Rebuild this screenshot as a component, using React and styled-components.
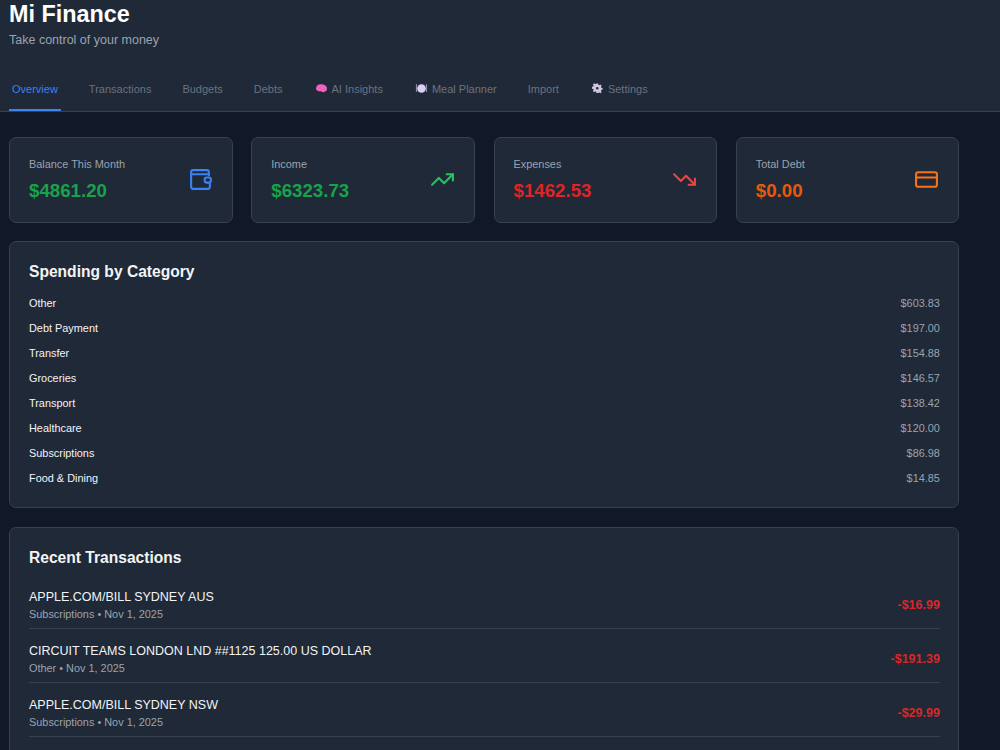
import styled, { createGlobalStyle } from 'styled-components'
import { TrendingUp, TrendingDown, CreditCard } from 'lucide-react'

const GlobalStyle = createGlobalStyle`
  html, body {
    margin: 0;
    padding: 0;
    height: 750px;
    overflow: hidden;
    background: #111827;
    font-family: "Liberation Sans", Arial, sans-serif;
  }
`

const tabs = [
  { label: 'Overview', active: true },
  { label: 'Transactions' },
  { label: 'Budgets' },
  { label: 'Debts' },
  { label: 'AI Insights', icon: 'brain' },
  { label: 'Meal Planner', icon: 'plate' },
  { label: 'Import' },
  { label: 'Settings', icon: 'gear' },
]

const categories = [
  ['Other', '$603.83'],
  ['Debt Payment', '$197.00'],
  ['Transfer', '$154.88'],
  ['Groceries', '$146.57'],
  ['Transport', '$138.42'],
  ['Healthcare', '$120.00'],
  ['Subscriptions', '$86.98'],
  ['Food & Dining', '$14.85'],
]

const transactions = [
  ['APPLE.COM/BILL SYDNEY AUS', 'Subscriptions • Nov 1, 2025', '-$16.99'],
  ['CIRCUIT TEAMS LONDON LND ##1125 125.00 US DOLLAR', 'Other • Nov 1, 2025', '-$191.39'],
  ['APPLE.COM/BILL SYDNEY NSW', 'Subscriptions • Nov 1, 2025', '-$29.99'],
]

const WalletIcon = ({ color }) => (
  <svg width="25" height="25" viewBox="0 0 24 24" fill="none" stroke={color} strokeWidth="2" strokeLinecap="round" strokeLinejoin="round">
    <path d="M20 8V5a2 2 0 0 0-2-2H5a2 2 0 0 0-2 2v14a2 2 0 0 0 2 2h14a2 2 0 0 0 2-2v-3" />
    <path d="M3 7h17" />
    <rect x="16" y="10" width="6" height="5" rx="2" />
  </svg>
)

// colour emoji in the tabs, drawn small
const TabEmoji = ({ type }) => {
  if (type === 'brain') {
    return (
      <svg width="15" height="13" viewBox="0 0 15 13">
        <path d="M2 6.500C2 3.800 4 2.300 7 2.300s6 1.500 6 4.400c0 1.600-.8 2.600-2.200 2.700-.6.800-1.500 1-2.400.7-.7-.6-1.300-.8-2.400-.8C3.700 9.300 2 8.400 2 6.500z" fill="#f062bd" />
      </svg>
    )
  }
  if (type === 'plate') {
    return (
      <svg width="15" height="13" viewBox="0 0 15 13">
        <path d="M2.500 2.500v7M12.500 2.500v7" stroke="#8f8ca6" strokeWidth="1.200" strokeLinecap="round" />
        <circle cx="7.500" cy="6.500" r="4.300" fill="#dccff5" />
      </svg>
    )
  }
  return (
    <svg width="15" height="13" viewBox="0 0 15 13">
      <g transform="translate(2 1) scale(.44)">
        <path
          fillRule="evenodd"
          d="M10 1h4l.6 3.200 1.900.8 2.700-1.800 2.800 2.800-1.800 2.700.8 1.900 3 .6v4l-3 .6-.8 1.900 1.800 2.700-2.800 2.800-2.700-1.800-1.900.8L14 23h-4l-.6-3.200-1.900-.8-2.700 1.800-2.800-2.800 1.800-2.700-.8-1.900-3-.6v-4l3-.6.8-1.900-1.800-2.700 2.800-2.800 2.700 1.800 1.900-.8zM12 9a3 3 0 1 0 0 6 3 3 0 0 0 0-6z"
          fill="#cfc6e0"
        />
      </g>
    </svg>
  )
}

export default function App() {
  return (
    <>
      <GlobalStyle />
      <Header>
        <Title>Mi Finance</Title>
        <Subtitle>Take control of your money</Subtitle>
        <TabBar>
          {tabs.map((t) => (
            <Tab key={t.label} $active={t.active}>
              {t.icon && <TabEmoji type={t.icon} />}
              {t.label}
            </Tab>
          ))}
        </TabBar>
      </Header>
      <Main>
        <StatGrid>
          <StatCard>
            <StatText>
              <StatLabel>Balance This Month</StatLabel>
              <StatValue $color="#16a34a">$4861.20</StatValue>
            </StatText>
            <WalletIcon color="#3b82f6" />
          </StatCard>
          <StatCard>
            <StatText>
              <StatLabel>Income</StatLabel>
              <StatValue $color="#16a34a">$6323.73</StatValue>
            </StatText>
            <TrendingUp size={25} color="#22c55e" />
          </StatCard>
          <StatCard>
            <StatText>
              <StatLabel>Expenses</StatLabel>
              <StatValue $color="#dc2626">$1462.53</StatValue>
            </StatText>
            <TrendingDown size={25} color="#ef4444" />
          </StatCard>
          <StatCard>
            <StatText>
              <StatLabel>Total Debt</StatLabel>
              <StatValue $color="#ea580c">$0.00</StatValue>
            </StatText>
            <CreditCard size={25} color="#f97316" />
          </StatCard>
        </StatGrid>

        <Panel>
          <PanelTitle>Spending by Category</PanelTitle>
          <CategoryList>
            {categories.map(([name, amount]) => (
              <CategoryRow key={name}>
                <CategoryName>{name}</CategoryName>
                <CategoryAmount>{amount}</CategoryAmount>
              </CategoryRow>
            ))}
          </CategoryList>
        </Panel>

        <Panel>
          <PanelTitle>Recent Transactions</PanelTitle>
          <TxList>
            {transactions.map(([name, meta, amount]) => (
              <TxRow key={name}>
                <div>
                  <TxName>{name}</TxName>
                  <TxMeta>{meta}</TxMeta>
                </div>
                <TxAmount>{amount}</TxAmount>
              </TxRow>
            ))}
          </TxList>
        </Panel>
      </Main>
    </>
  )
}

const Header = styled.header`
  background: #1f2937;
  border-bottom: 1px solid #374151;
  height: 111px;
  padding-left: 9px;
  overflow: hidden;
`

const Title = styled.h1`
  margin: 0;
  color: #fff;
  font-size: 23.400px;
  font-weight: 700;
  line-height: 28px;
`

const Subtitle = styled.p`
  margin: 4px 0 0;
  color: #9ca3af;
  font-size: 12.500px;
  line-height: 16px;
`

const TabBar = styled.nav`
  display: flex;
  gap: 25px;
  margin-top: 24px;
`

const Tab = styled.div`
  display: flex;
  align-items: center;
  gap: 3px;
  height: 39px;
  padding: 0 3px 4px;
  box-sizing: border-box;
  color: ${(p) => (p.$active ? '#3b82f6' : '#6b7280')};
  border-bottom: 2px solid ${(p) => (p.$active ? '#3b82f6' : 'transparent')};
  font-size: 11px;
`

const Main = styled.main`
  width: 950.400px;
  margin-left: 9px;
  padding-top: 25px;
`

const StatGrid = styled.section`
  display: grid;
  grid-template-columns: repeat(4, 1fr);
  gap: 18.670px;
`

const StatCard = styled.div`
  display: flex;
  justify-content: space-between;
  align-items: center;
  height: 85.500px;
  box-sizing: border-box;
  padding: 0 19px;
  background: #1f2937;
  border: 1px solid #374151;
  border-radius: 7px;
`

const StatText = styled.div`
  padding-top: 1px;
`

const StatLabel = styled.div`
  color: #9ca3af;
  font-size: 10.900px;
  line-height: 14px;
`

const StatValue = styled.div`
  margin-top: 8px;
  color: ${(p) => p.$color};
  font-size: 18.700px;
  font-weight: 700;
  line-height: 24px;
`

const Panel = styled.section`
  margin-top: 18.500px;
  padding: 19px 18.500px 17px 19px;
  background: #1f2937;
  border: 1px solid #374151;
  border-radius: 7px;
`

const PanelTitle = styled.h2`
  margin: 0;
  color: #f3f4f6;
  font-size: 15.600px;
  font-weight: 700;
  line-height: 22px;
`

const CategoryList = styled.div`
  margin-top: 7px;
`

const CategoryRow = styled.div`
  display: flex;
  justify-content: space-between;
  align-items: center;
  height: 25px;
  font-size: 10.900px;
`

const CategoryName = styled.span`
  color: #f3f4f6;
`

const CategoryAmount = styled.span`
  color: #9ca3af;
`

const TxList = styled.div`
  margin-top: 20px;
`

const TxRow = styled.div`
  display: flex;
  justify-content: space-between;
  align-items: center;
  padding-bottom: 7px;
  margin-bottom: 14px;
  border-bottom: 1px solid #374151;
`

const TxName = styled.div`
  color: #f3f4f6;
  font-size: 12.500px;
  line-height: 17px;
`

const TxMeta = styled.div`
  margin-top: 1px;
  color: #9ca3af;
  font-size: 10.900px;
  line-height: 14px;
`

const TxAmount = styled.div`
  color: #dc2626;
  font-size: 12.500px;
  font-weight: 700;
`
